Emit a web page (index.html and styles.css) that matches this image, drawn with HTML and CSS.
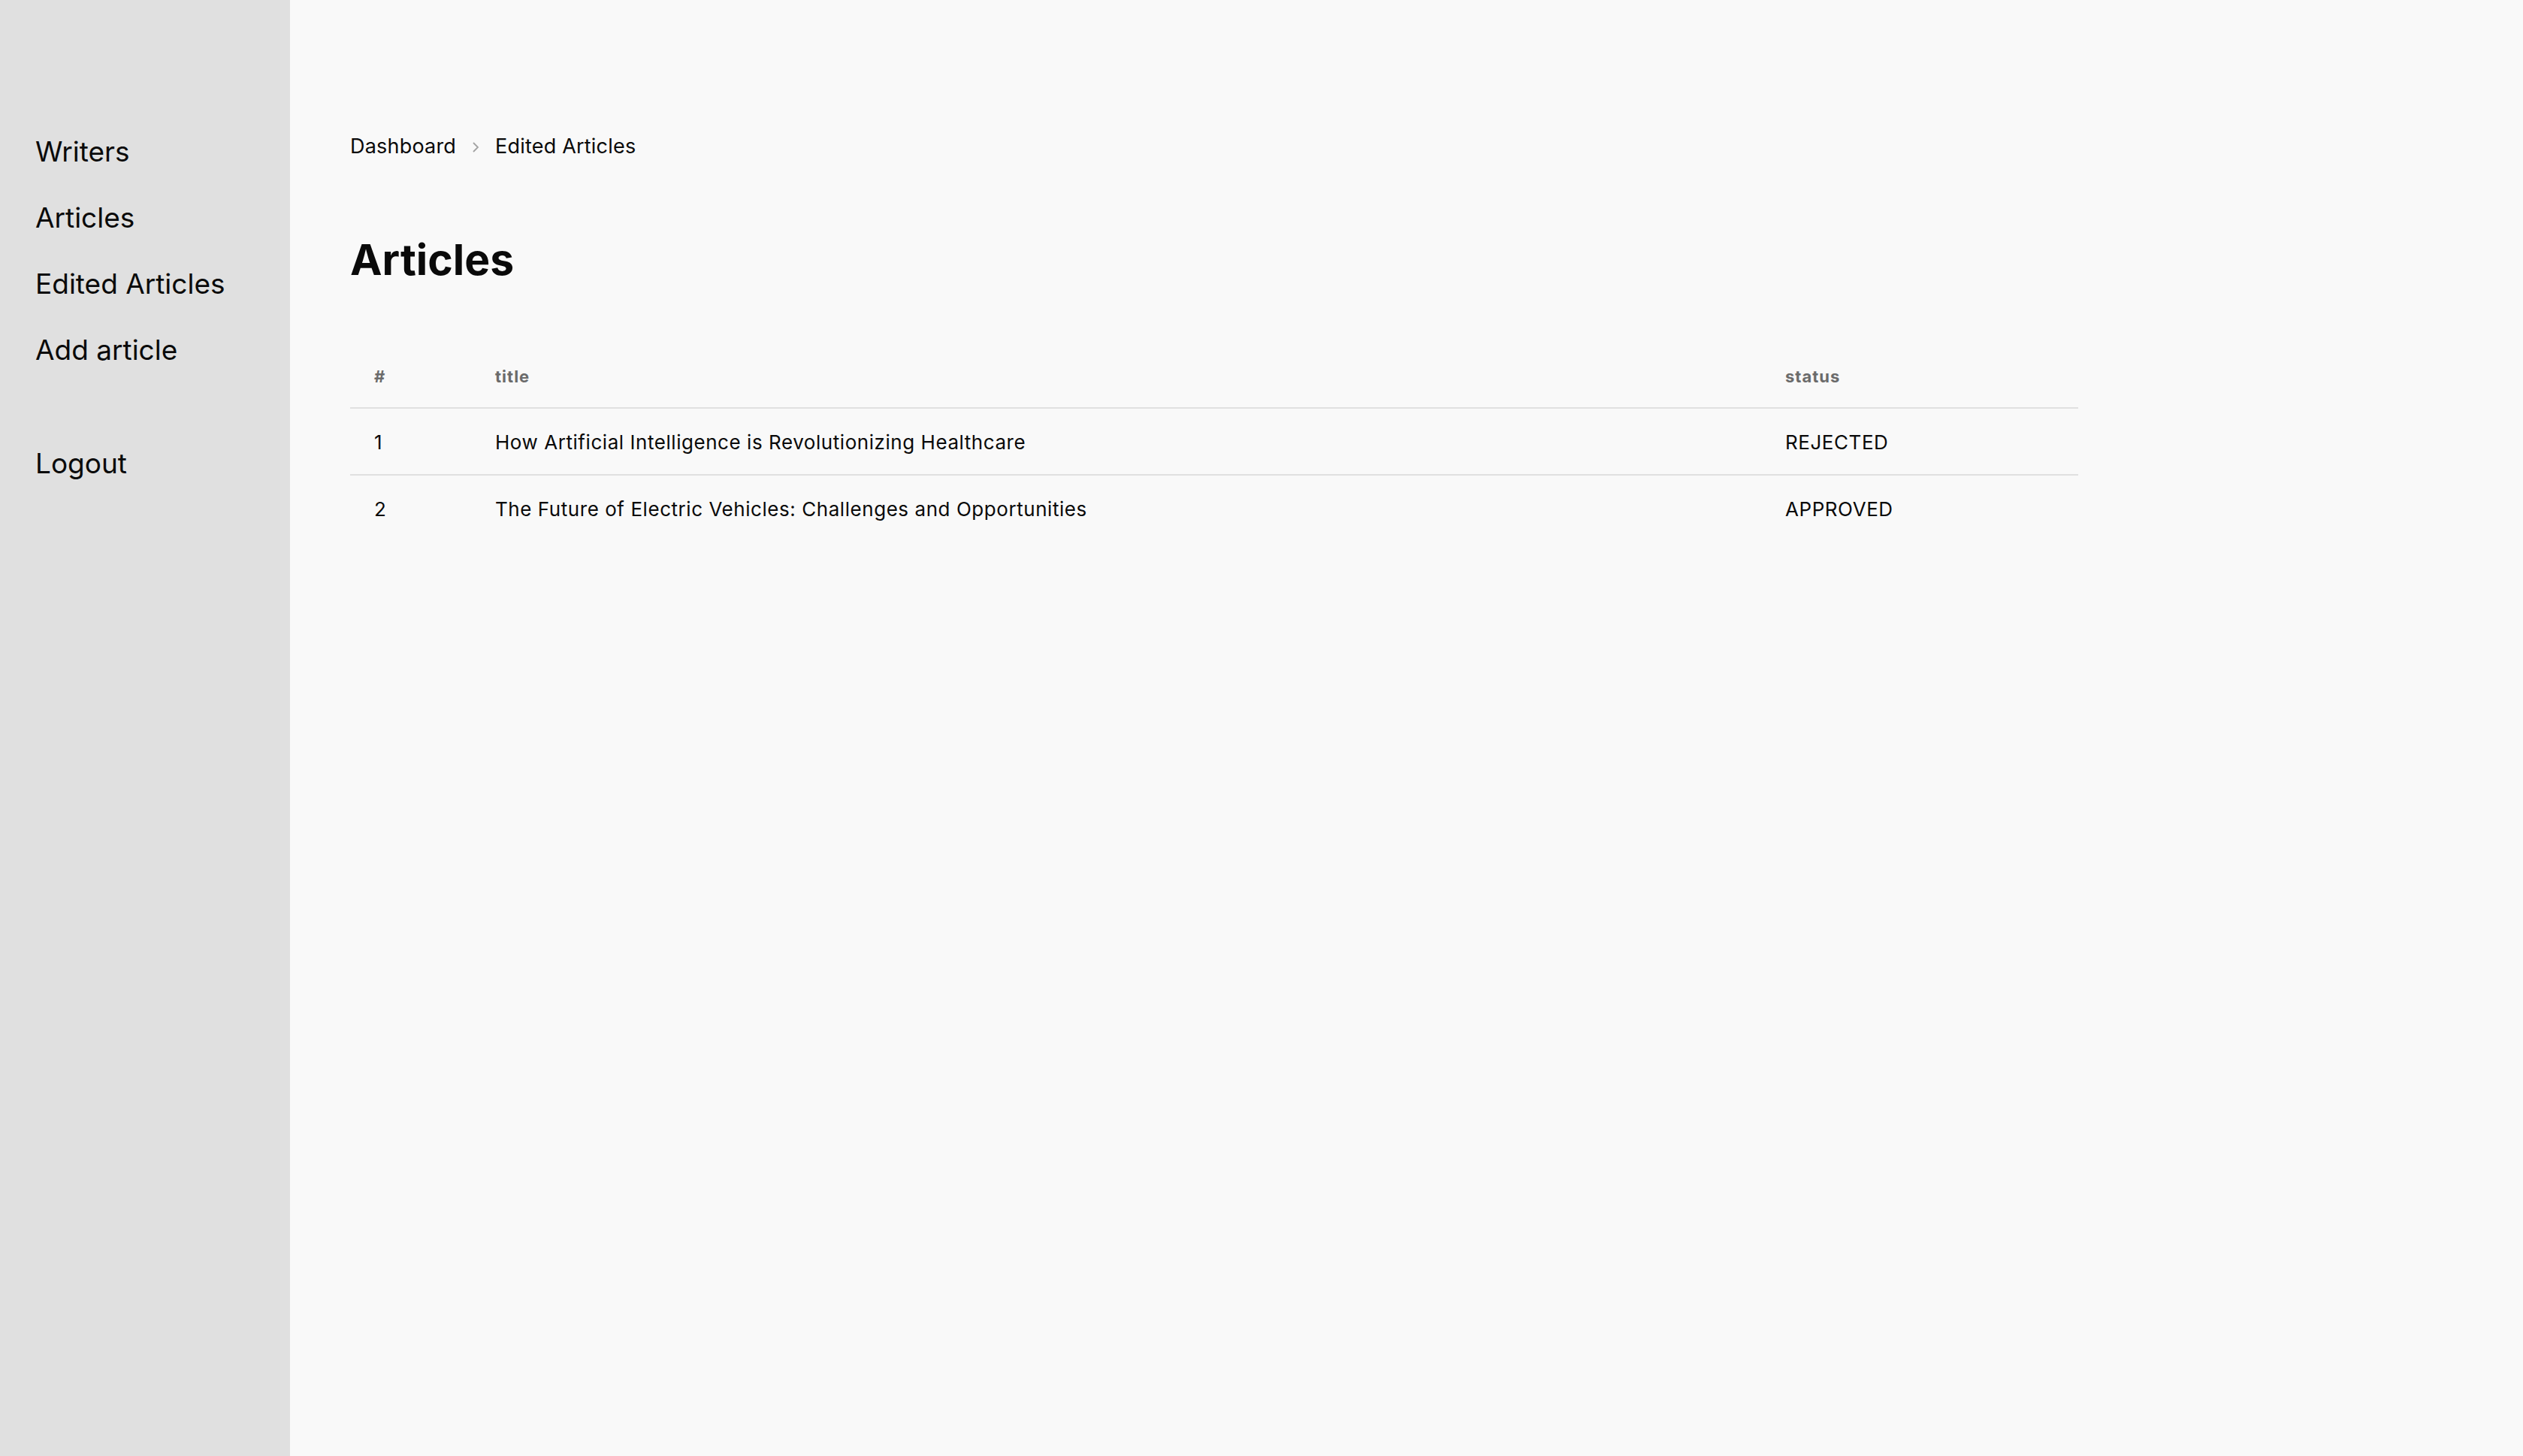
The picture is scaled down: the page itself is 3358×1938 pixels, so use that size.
FILE: index.html
```html
<!DOCTYPE html>
<html lang="en">
<head>
<meta charset="utf-8">
<title>Edited Articles</title>
<link rel="stylesheet" href="styles.css">
</head>
<body>
<div class="layout">
  <aside class="sidebar">
    <nav class="nav">
      <a class="nav-link" href="#">Writers</a>
      <a class="nav-link" href="#">Articles</a>
      <a class="nav-link" href="#">Edited Articles</a>
      <a class="nav-link" href="#">Add article</a>
      <a class="nav-link logout" href="#">Logout</a>
    </nav>
  </aside>
  <main class="main">
    <div class="breadcrumb">
      <a class="crumb" href="#">Dashboard</a>
      <svg class="chev" width="12" height="16" viewBox="0 0 12 16"><path d="M3 2 L9 8 L3 14" fill="none" stroke="#a3a3a3" stroke-width="1.8"/></svg>
      <span class="crumb">Edited Articles</span>
    </div>
    <h1 class="title">Articles</h1>
    <table class="table">
      <colgroup>
        <col class="c-num"><col class="c-title"><col class="c-status">
      </colgroup>
      <thead>
        <tr><th>#</th><th>title</th><th>status</th></tr>
      </thead>
      <tbody>
        <tr><td>1</td><td>How Artificial Intelligence is Revolutionizing Healthcare</td><td>REJECTED</td></tr>
        <tr><td>2</td><td>The Future of Electric Vehicles: Challenges and Opportunities</td><td>APPROVED</td></tr>
      </tbody>
    </table>
  </main>
</div>
</body>
</html>
```
FILE: styles.css
```css
html, body {
  margin: 0;
  padding: 0;
  height: 100%;
}
body {
  font-family: Inter, "Noto Sans", "Liberation Sans", sans-serif;
  color: #0a0a0a;
  background: #f9f9f9;
}
.layout {
  display: flex;
  min-height: 100vh;
}
.sidebar {
  width: 386px;
  flex: 0 0 386px;
  background: #e0e0e0;
}
.nav {
  display: flex;
  flex-direction: column;
  padding: 158px 0 0 47px;
}
.nav-link {
  font-size: 37px;
  line-height: 88px;
  color: #0a0a0a;
  text-decoration: none;
}
.logout {
  margin-top: 63px;
}
.main {
  flex: 1;
  padding: 174px 0 0 80px;
}
.breadcrumb {
  display: flex;
  align-items: center;
  gap: 20px;
  font-size: 27px;
  line-height: 42px;
  letter-spacing: 0.2px;
}
.crumb {
  color: #0a0a0a;
  text-decoration: none;
}
.chev {
  display: block;
  margin-top: 1px;
}
.title {
  margin: 94px 0 0 0;
  font-size: 57px;
  line-height: 72px;
  font-weight: 700;
  color: #0a0a0a;
}
.table {
  margin-top: 79px;
  width: 2300px;
  border-collapse: collapse;
  table-layout: fixed;
}
.c-num { width: 161px; }
.c-status { width: 422px; }
.table th {
  text-align: left;
  font-size: 22px;
  line-height: 33px;
  font-weight: 700;
  letter-spacing: 1px;
  color: #6b6b6b;
  padding: 24px 32px;
  border-bottom: 2px solid #e0e0e0;
}
.table td {
  font-size: 26px;
  line-height: 39px;
  letter-spacing: 0.55px;
  padding: 25px 32px 23px;
  color: #0a0a0a;
}
.table tbody tr + tr td {
  border-top: 2px solid #e0e0e0;
}
```
